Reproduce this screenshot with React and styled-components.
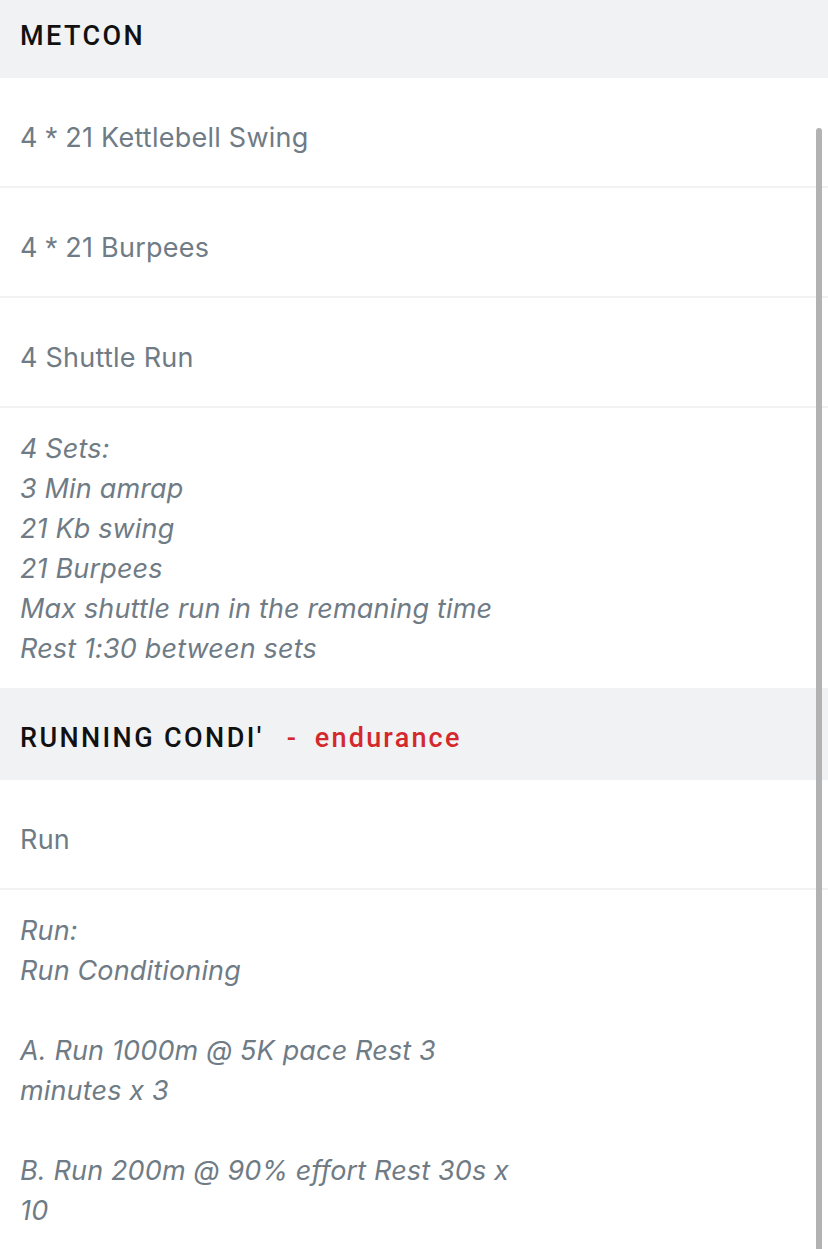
import React from "react"
import styled, { createGlobalStyle } from "styled-components"

const GlobalStyle = createGlobalStyle`
  * { box-sizing: border-box; }
  html, body { margin: 0; padding: 0; background: #fff; }
  body { font-family: Inter, "Noto Sans", sans-serif; -webkit-font-smoothing: antialiased; }
`

const sections = [
    {
        title: "METCON",
        rows: [
            { text: "4 * 21 Kettlebell Swing" },
            { text: "4 * 21 Burpees" },
            { text: "4 Shuttle Run" },
            { notes: ["4 Sets:", "3 Min amrap", "21 Kb swing", "21 Burpees", "Max shuttle run in the remaning time", "Rest 1:30 between sets"] },
        ],
    },
    {
        title: "RUNNING CONDI'",
        tag: "endurance",
        rows: [
            { text: "Run" },
            { notes: ["Run:", "Run Conditioning", "", "A. Run 1000m @ 5K pace Rest 3", "minutes x 3", "", "B. Run 200m @ 90% effort Rest 30s x", "10"] },
        ],
    },
]

// the app font draws a raised asterisk, Roboto's is closer than Inter's
function withStars(text){
    return text.split("*").flatMap( (part, i) => i === 0 ? [part] : [<Star key={i}>*</Star>, part])
}

export default function App(){
    return(
        <Screen>
            <GlobalStyle />
            <List>
                {sections.map( (section) =>
                    <section key={section.title}>
                        <Header>
                            <Title>{section.title}</Title>
                            {section.tag && <>
                                <Dash>-</Dash>
                                <Tag>{section.tag}</Tag>
                            </>}
                        </Header>
                        {section.rows.map( (row, i) => row.notes
                            ? <Row key={i} multi>
                                {row.notes.map( (line, j) => <NoteLine key={j}>{line || "\u00a0"}</NoteLine>)}
                              </Row>
                            : <Row key={i}><Movement>{withStars(row.text)}</Movement></Row>
                        )}
                    </section>
                )}
            </List>
            <ScrollThumb />
        </Screen>
    )
}

const Screen = styled.div`
    position: relative;
    width: 828px;
    height: 1249px;
    overflow: hidden;
    background: #fff;
`
const List = styled.main`
    display: flex;
    flex-direction: column;
    margin-top: -14px;
`
const Header = styled.header`
    display: flex;
    align-items: center;
    height: 92px;
    padding: 8px 20px 0 20px;
    background-color: #f1f2f4;
`
const Title = styled.h2`
    margin: 0;
    font-family: Roboto, "Liberation Sans", sans-serif;
    font-size: 27px;
    font-weight: 500;
    letter-spacing: 2.4px;
    color: #111;
`
const Dash = styled.span`
    margin: 0 19px 0 23px;
    font-family: Roboto, sans-serif;
    font-size: 27px;
    font-weight: 500;
    color: #d4282c;
`
const Tag = styled.span`
    font-family: Roboto, sans-serif;
    font-size: 27px;
    font-weight: 500;
    letter-spacing: 2.2px;
    color: #d4282c;
`
const Row = styled.div`
    display: flex;
    flex-direction: column;
    padding: ${p => p.multi ? "21px 20px 19px" : "40px 20px 28px"};
    border-bottom: 2px solid #f2f2f3;
    &:last-child { border-bottom: none; }
`
const Movement = styled.span`
    font-size: 27px;
    line-height: 40px;
    letter-spacing: 0.25px;
    color: #6f7b85;
`
const Star = styled.span`
    font-family: Roboto, sans-serif;
`
const NoteLine = styled.span`
    font-size: 27px;
    line-height: 40px;
    letter-spacing: 0.15px;
    font-style: italic;
    color: #6f7b85;
`
const ScrollThumb = styled.div`
    position: absolute;
    top: 128px;
    left: 816px;
    width: 6px;
    height: 1140px;
    border-radius: 3px;
    background: #b2b2b2;
`
